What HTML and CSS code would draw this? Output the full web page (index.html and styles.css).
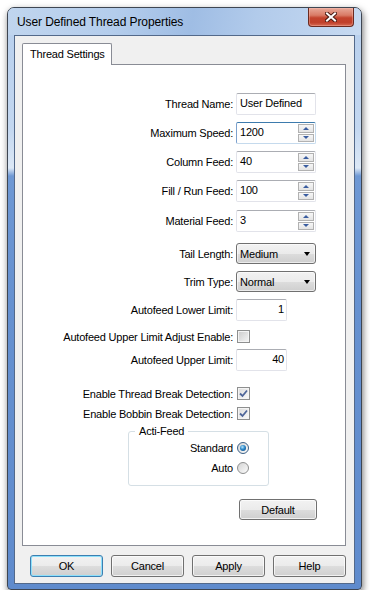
FILE: index.html
```html
<!DOCTYPE HTML>
<html>
<head>
    <title>User Defined Thread Properties</title>
    <meta charset="utf-8">
    <link rel="stylesheet" href="styles.css">
</head>
<body>
<div class="window">
    <!--title bar-->
    <div class="titlebar">
        <span class="title">User Defined Thread Properties</span>
        <span class="close">
            <svg width="12" height="10" viewBox="0 0 12 10">
                <path d="M2 1.5L10 8.5M10 1.5L2 8.5" stroke="#4a1a12" stroke-width="4" stroke-linecap="square" fill="none"/>
                <path d="M2 1.5L10 8.5M10 1.5L2 8.5" stroke="#fff" stroke-width="2" stroke-linecap="square" fill="none"/>
            </svg>
        </span>
    </div>

    <div class="client">
        <div class="tabs"><div class="tab">Thread Settings</div></div>

        <div class="page">
            <div class="row first">
                <span class="lbl">Thread Name:</span>
                <span class="text">User Defined</span>
            </div>
            <div class="row">
                <span class="lbl">Maximum Speed:</span>
                <span class="text spin focus">1200
                    <span class="spinbtns"><span class="sb up"></span><span class="sb down"></span></span>
                </span>
            </div>
            <div class="row">
                <span class="lbl">Column Feed:</span>
                <span class="text spin">40
                    <span class="spinbtns"><span class="sb up"></span><span class="sb down"></span></span>
                </span>
            </div>
            <div class="row">
                <span class="lbl">Fill / Run Feed:</span>
                <span class="text spin">100
                    <span class="spinbtns"><span class="sb up"></span><span class="sb down"></span></span>
                </span>
            </div>
            <div class="row gap8">
                <span class="lbl">Material Feed:</span>
                <span class="text spin">3
                    <span class="spinbtns"><span class="sb up"></span><span class="sb down"></span></span>
                </span>
            </div>
            <div class="row gap11">
                <span class="lbl">Tail Length:</span>
                <span class="combo">Medium<i class="arrow"></i></span>
            </div>
            <div class="row">
                <span class="lbl">Trim Type:</span>
                <span class="combo">Normal<i class="arrow"></i></span>
            </div>
            <div class="row">
                <span class="lbl">Autofeed Lower Limit:</span>
                <span class="text num">1</span>
            </div>
            <div class="row gap9">
                <span class="lbl">Autofeed Upper Limit Adjust Enable:</span>
                <span class="check"></span>
            </div>
            <div class="row gap6">
                <span class="lbl">Autofeed Upper Limit:</span>
                <span class="text num">40</span>
            </div>
            <div class="row gap16">
                <span class="lbl">Enable Thread Break Detection:</span>
                <span class="check on">
                    <svg width="11" height="11" viewBox="0 0 11 11"><path d="M2 5.5L4.5 8L9 2.5" stroke="#4f6699" stroke-width="1.8" fill="none"/></svg>
                </span>
            </div>
            <div class="row">
                <span class="lbl">Enable Bobbin Break Detection:</span>
                <span class="check on">
                    <svg width="11" height="11" viewBox="0 0 11 11"><path d="M2 5.5L4.5 8L9 2.5" stroke="#4f6699" stroke-width="1.8" fill="none"/></svg>
                </span>
            </div>

            <!--acti-feed group-->
            <fieldset class="group">
                <legend>Acti-Feed</legend>
                <div class="radiorow"><span>Standard</span><span class="radio on"><i></i></span></div>
                <div class="radiorow"><span>Auto</span><span class="radio"></span></div>
            </fieldset>

            <div class="defrow"><span class="btn">Default</span></div>
        </div>

        <div class="buttons">
            <span class="btn main">OK</span>
            <span class="btn">Cancel</span>
            <span class="btn">Apply</span>
            <span class="btn">Help</span>
        </div>
    </div>
</div>
</body>
</html>
```

FILE: styles.css
```css
*{ margin:0; padding:0; box-sizing:border-box;}
body{
    background:#fff;
    font-family:"Liberation Sans", Arial, sans-serif;
    font-size:11px;
    color:#000;
}
.window{
    margin:7px 0 0 7px;
    width:355px;
    height:583px;
    border:1px solid #3e4652;
    border-radius:7px 7px 4px 4px;
    padding:0 6px 5px;
    display:flex;
    flex-direction:column;
    background:linear-gradient(#b7cfed 0, #c3d7f0 120px, #dce8f6 160px, #6e98d4 168px, #6691d0 300px, #5f8bcd 100%);
    box-shadow:1px 3px 7px rgba(0,0,0,0.55);
}
.titlebar{
    height:27px;
    display:flex;
    align-items:flex-start;
    justify-content:space-between;
    margin:0 -6px;
    padding:0 7px 0 9px;
    border-radius:6px 6px 0 0;
    background:linear-gradient(100deg, #c0d5ee 0%, #b4cdec 30%, #9fbde4 52%, #b2cbeb 70%, #c7daf1 100%);
}
.title{
    font-size:12px;
    line-height:27px;
    padding-top:1px;
    letter-spacing:-0.1px;
    color:#000;
}
.close{
    width:46px;
    height:19px;
    border:1px solid #6b2a20;
    border-top:none;
    border-radius:0 0 4px 4px;
    background:linear-gradient(#e8a898 0, #d97b66 40%, #c3432d 55%, #c0402b 80%, #d66b54 100%);
    box-shadow:inset 0 0 0 1px rgba(255,200,190,0.35);
    display:flex;
    align-items:center;
    justify-content:center;
}
.client{
    flex:1;
    border:1px solid #53698a;
    background:#f0f0f0;
    padding:7px 8px 6px 7px;
    display:flex;
    flex-direction:column;
    letter-spacing:-0.2px;
}
.tabs{
    height:21px;
    display:flex;
}
.tab{
    width:90px;
    height:22px;
    position:relative;
    z-index:1;
    background:#fff;
    border:1px solid #898c95;
    border-bottom:none;
    border-radius:2px 2px 0 0;
    padding:4px 0 0 7px;
}
.page{
    height:482px;
    background:#fff;
    border:1px solid #898c95;
    padding-top:28px;
    display:flex;
    flex-direction:column;
}
.row{
    display:flex;
    align-items:center;
    gap:3px;
    margin-top:7px;
}
.row.first{ margin-top:0;}
.row.gap6{ margin-top:6px;}
.row.gap8{ margin-top:8px;}
.row.gap9{ margin-top:9px;}
.row.gap11{ margin-top:11px;}
.row.gap16{ margin-top:16px;}
.lbl{
    width:210px;
    text-align:right;
    white-space:nowrap;
}
.text{
    width:80px;
    height:22px;
    border:1px solid #e2e3ea;
    border-top-color:#abadb3;
    border-radius:2px;
    padding:3px 2px 0 3px;
    background:#fff;
    display:flex;
    justify-content:space-between;
}
.text.focus{
    border-color:#c5daed;
    border-top-color:#3d7bad;
    border-left-color:#7da2ce;
}
.text.num{
    width:51px;
    justify-content:flex-end;
    padding-right:2px;
}
.spinbtns{
    width:17px;
    margin:-3px -2px 0 0;
    padding:1px 1px 1px 0;
    display:flex;
    flex-direction:column;
    gap:1px;
}
.sb{
    flex:1;
    border:1px solid #b1b1b1;
    background:linear-gradient(#f7f7f7, #e4e4e4);
    display:flex;
    align-items:center;
    justify-content:center;
}
.sb::after{
    content:"";
    border-left:3px solid transparent;
    border-right:3px solid transparent;
}
.sb.up::after{ border-bottom:3px solid #3a5da0;}
.sb.down::after{ border-top:3px solid #3a5da0;}
.combo{
    width:80px;
    height:21px;
    border:1px solid #707070;
    border-radius:3px;
    background:linear-gradient(#f2f2f2 0, #ebebeb 50%, #dddddd 51%, #cfcfcf 100%);
    box-shadow:inset 0 0 0 1px rgba(255,255,255,0.6);
    padding:0 5px 0 3px;
    display:flex;
    align-items:center;
    justify-content:space-between;
}
.arrow{
    border-left:3.5px solid transparent;
    border-right:3.5px solid transparent;
    border-top:4px solid #000;
}
.check{
    width:13px;
    height:13px;
    margin-left:1px;
    border:1px solid #8e8f8f;
    background:linear-gradient(135deg, #cbcbcb, #f6f6f6);
    box-shadow:inset 0 0 0 1px #f4f4f4;
    display:flex;
    align-items:center;
    justify-content:center;
}
.check.on{
    background:linear-gradient(135deg, #dcdcdc, #fafafa);
}
.group{
    margin:5px 0 0 105px;
    width:141px;
    height:61px;
    border:1px solid #d5dfe5;
    border-radius:3px;
    padding:5px 19px 0 0;
    display:flex;
    flex-direction:column;
    gap:8px;
}
.group legend{
    margin-left:6px;
    padding:0 4px 0 4px;
}
.radiorow{
    display:flex;
    justify-content:flex-end;
    align-items:center;
    gap:4px;
    height:12px;
}
.radio{
    width:12px;
    height:12px;
    border-radius:50%;
    border:1px solid #8e8f8f;
    background:linear-gradient(135deg, #d4d4d4, #fbfbfb);
    display:flex;
    align-items:center;
    justify-content:center;
}
.radio.on{
    border-color:#3a5f86;
}
.radio i{
    width:6px;
    height:6px;
    border-radius:50%;
    background:radial-gradient(circle at 40% 35%, #b8e6fb 0, #2a86c8 45%, #0b3f75 100%);
}
.defrow{
    margin-top:13px;
    padding-left:216px;
    display:flex;
}
.btn{
    width:78px;
    height:21px;
    border:1px solid #707070;
    border-radius:3px;
    background:linear-gradient(#f2f2f2 0, #ebebeb 50%, #dddddd 51%, #cfcfcf 100%);
    box-shadow:inset 0 0 0 1px rgba(255,255,255,0.7);
    display:flex;
    align-items:center;
    justify-content:center;
}
.buttons{
    margin-top:9px;
    display:flex;
    justify-content:flex-end;
    gap:8px;
}
.buttons .btn{
    width:73px;
    height:22px;
}
.btn.main{
    border-color:#3c7fb1;
    box-shadow:inset 0 0 0 1px #8ee0fb;
}
```
